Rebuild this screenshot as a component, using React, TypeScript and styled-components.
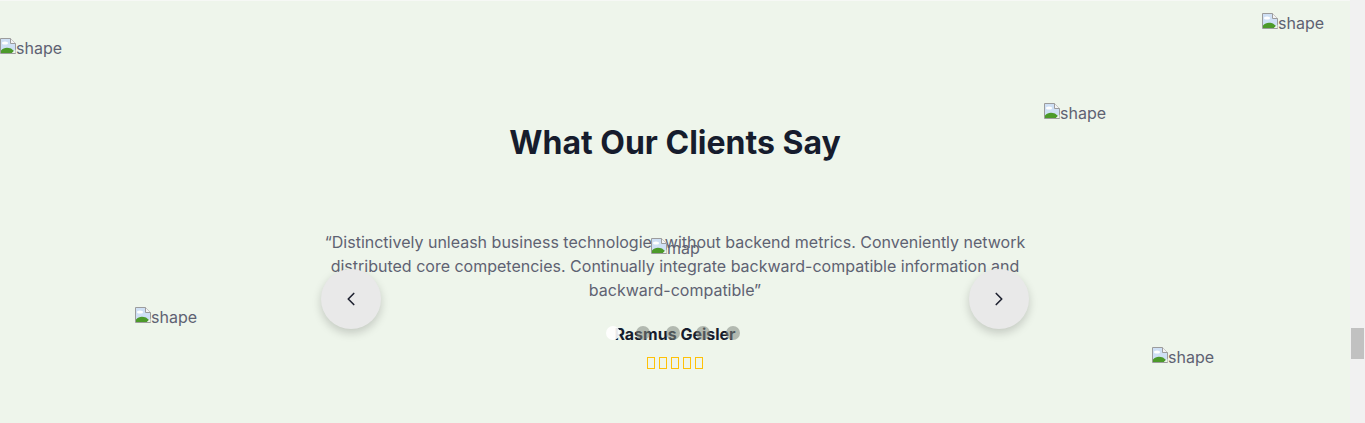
import React from "react";
import styled, { createGlobalStyle } from "styled-components";
import { ChevronLeft, ChevronRight } from "lucide-react";

const GlobalStyle = createGlobalStyle`
  html, body { margin: 0; padding: 0; overflow: hidden; }
  body { font-family: Inter, "Noto Sans", Arial, sans-serif; background: #ffffff; }
  * { box-sizing: border-box; }
`;

const Page = styled.div`
  display: flex;
  width: 1365px;
  height: 423px;
`;

const Section = styled.section`
  position: relative;
  flex: 1;
  background: #eef5eb;
  border-top: 1px solid #f6f8f5;
  display: flex;
  flex-direction: column;
  align-items: center;
  padding-top: 119px;
  overflow: hidden;
`;

const ScrollTrack = styled.div`
  width: 15px;
  background: #f1f1f1;
  display: flex;
  justify-content: center;
`;

const ScrollThumb = styled.div`
  width: 13px;
  height: 31px;
  margin-top: 328px;
  background: #c1c1c1;
`;

const Title = styled.h2`
  margin: 0;
  font-size: 32px;
  line-height: 46px;
  font-weight: 700;
  color: #161c2d;
  letter-spacing: 0;
`;

const Carousel = styled.div`
  position: relative;
  width: 708px;
  margin-top: 64px;
  display: flex;
  flex-direction: column;
  align-items: center;
`;

const Quote = styled.p`
  margin: 0;
  width: 704px;
  text-align: center;
  font-size: 16px;
  line-height: 24px;
  color: #5e6272;
`;

const Name = styled.h4`
  margin: 21px 0 0;
  font-size: 16px;
  line-height: 22px;
  font-weight: 700;
  color: #161c2d;
`;

const Stars = styled.div`
  display: flex;
  gap: 3.5px;
  margin-top: 12px;
`;

const Star = styled.span`
  width: 8.5px;
  height: 12px;
  border: 1.4px solid #ffc107;
`;

const NavButton = styled.button<{ $side: "left" | "right" }>`
  position: absolute;
  top: 39px;
  ${(p) => (p.$side === "left" ? "left: 0;" : "right: 0;")}
  width: 60px;
  height: 60px;
  border-radius: 50%;
  border: none;
  background: #e9e9e9;
  box-shadow: 0 4px 10px rgba(0, 0, 0, 0.18);
  display: flex;
  align-items: center;
  justify-content: center;
  color: #1f2230;
  padding: 0;
  cursor: pointer;
`;

const Dots = styled.div`
  position: absolute;
  top: 96px;
  left: 50%;
  transform: translateX(calc(-50% - 2px));
  display: flex;
  gap: 16px;
`;

const Dot = styled.span<{ $active?: boolean }>`
  width: 14px;
  height: 14px;
  border-radius: 50%;
  background: ${(p) => (p.$active ? "rgba(255,255,255,0.9)" : "rgba(130,134,128,0.55)")};
`;

const Broken = styled.span<{ $top: number; $left: number }>`
  position: absolute;
  top: ${(p) => p.$top}px;
  left: ${(p) => p.$left}px;
  display: inline-flex;
  align-items: flex-start;
  font-size: 16px;
  line-height: 19px;
  color: #5e6272;
  white-space: nowrap;
`;

const BrokenIcon = styled.svg`
  display: block;
  flex-shrink: 0;
  margin-top: -1px;
`;

const BrokenImage: React.FC<{ alt: string; top: number; left: number }> = ({ alt, top, left }) => (
  <Broken $top={top} $left={left}>
    <BrokenIcon width="16" height="16" viewBox="0 0 16 16">
      <path d="M0.5 0.5h10l5 5v10h-15z" fill="#cfe0f5" stroke="#9c9c9c" />
      <path d="M10.5 0.5v5h5" fill="#f4f4f4" stroke="#9c9c9c" />
      <ellipse cx="5" cy="5" rx="3" ry="1.6" fill="#ffffff" />
      <path d="M1 15V12.5C3.5 9.5 7 9 11 10.5L14 13L12 15z" fill="#4c9a2a" />
      <path d="M12 15l3.5-3.5V15z" fill="#eef5eb" />
    </BrokenIcon>
    {alt}
  </Broken>
);

const quote =
  "\u201CDistinctively unleash business technologies without backend metrics. Conveniently network distributed core competencies. Continually integrate backward-compatible information and backward-compatible\u201D";

export default function App() {
  return (
    <>
      <GlobalStyle />
      <Page>
        <Section>
          <BrokenImage alt="shape" top={38} left={0} />
          <BrokenImage alt="shape" top={13} left={1262} />
          <BrokenImage alt="shape" top={103} left={1044} />
          <BrokenImage alt="shape" top={307} left={135} />
          <BrokenImage alt="shape" top={347} left={1152} />
          <Title>What Our Clients Say</Title>
          <Carousel>
            <Quote>{quote}</Quote>
            <Name>Rasmus Geisler</Name>
            <Stars>
              {[0, 1, 2, 3, 4].map((i) => (
                <Star key={i} />
              ))}
            </Stars>
            <NavButton $side="left" aria-label="Previous">
              <ChevronLeft size={22} strokeWidth={1.8} />
            </NavButton>
            <NavButton $side="right" aria-label="Next">
              <ChevronRight size={22} strokeWidth={1.8} />
            </NavButton>
            <Dots>
              <Dot $active />
              <Dot />
              <Dot />
              <Dot />
              <Dot />
            </Dots>
          </Carousel>
          <BrokenImage alt="map" top={238} left={651} />
        </Section>
        <ScrollTrack>
          <ScrollThumb />
        </ScrollTrack>
      </Page>
    </>
  );
}
